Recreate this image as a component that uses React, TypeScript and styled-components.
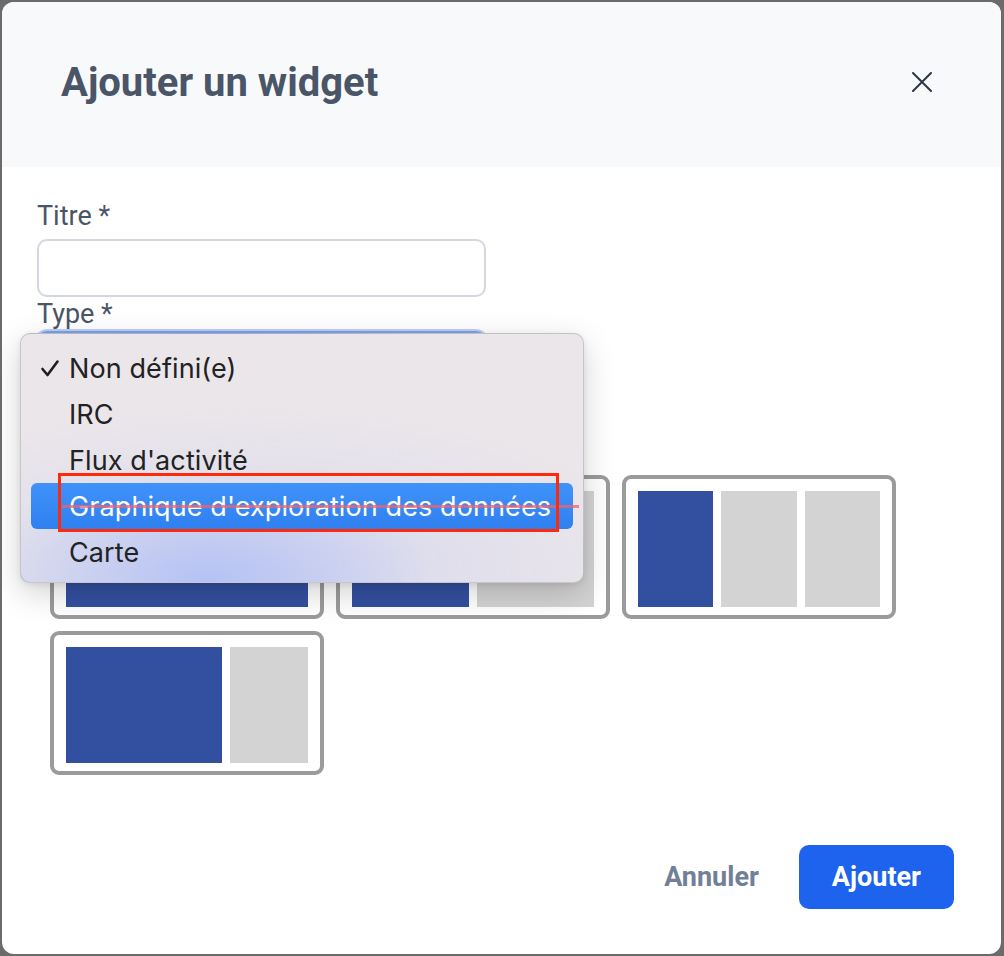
import React from "react";
import styled, { createGlobalStyle } from "styled-components";

const GlobalStyle = createGlobalStyle`
  html, body {
    margin: 0;
    padding: 0;
    background: #6b6b6b;
  }
  body {
    width: 1004px;
    height: 956px;
    overflow: hidden;
    font-family: Roboto, "Liberation Sans", sans-serif;
  }
  * { box-sizing: border-box; }
`;

const Page = styled.div`
  padding: 2px 3px 2px 2px;
`;

const Modal = styled.div`
  position: relative;
  width: 999px;
  height: 952px;
  display: flex;
  flex-direction: column;
  background: #ffffff;
  border-radius: 12px;
  overflow: hidden;
`;

const Header = styled.div`
  height: 165px;
  flex: none;
  display: flex;
  align-items: center;
  justify-content: space-between;
  padding: 0 69px 4px 59px;
  background: #f8f9fb;
`;

const Title = styled.h2`
  margin: 0;
  font: 700 40px/48px Roboto, sans-serif;
  color: #4a5568;
`;

const CloseButton = styled.button`
  width: 20px;
  height: 20px;
  padding: 0;
  border: none;
  background: transparent;
  color: #2d3748;
  display: flex;
  margin-top: -2px;
  svg { display: block; }
`;

const Body = styled.div`
  flex: 1;
  padding: 33px 35px 0 35px;
`;

const Label = styled.label<{ $gap: number }>`
  display: block;
  font: 400 27px/32px Roboto, sans-serif;
  color: #4a5568;
  margin-bottom: ${(p) => p.$gap}px;
`;

const TextInput = styled.input`
  display: block;
  width: 449px;
  height: 58px;
  border: 2px solid #d3d7df;
  border-radius: 10px;
  background: #fff;
  margin: 0 0 1px 0;
  outline: none;
`;

const SelectWrap = styled.div`
  position: relative;
  width: 449px;
`;

const SelectBox = styled.div`
  height: 58px;
  border: 2px solid #7ea3e8;
  border-radius: 10px;
  background: #fff;
  box-shadow: 0 0 0 2px rgba(110, 150, 230, 0.45);
`;

const Dropdown = styled.div`
  position: absolute;
  left: -17px;
  top: 2px;
  width: 564px;
  padding: 11px 0 7px;
  border: 1px solid rgba(0, 0, 0, 0.14);
  border-radius: 10px;
  background:
    radial-gradient(ellipse 230px 110px at 33% 100%, rgba(175, 190, 245, 0.85), rgba(175, 190, 245, 0) 100%),
    radial-gradient(ellipse 420px 160px at 40% 95%, rgba(205, 210, 240, 0.7), rgba(205, 210, 240, 0) 100%),
    #ebe6ea;
  box-shadow: 0 10px 32px rgba(0, 0, 0, 0.18), 0 2px 6px rgba(0, 0, 0, 0.08);
  z-index: 5;
`;

const Option = styled.div<{ $active?: boolean }>`
  height: 46px;
  margin: 0 10px;
  padding-left: 9px;
  display: flex;
  align-items: center;
  border-radius: 6px;
  font: 400 27px/1 Inter, "Noto Sans", sans-serif;
  letter-spacing: 0.1px;
  color: ${(p) => (p.$active ? "#ffffff" : "#222222")};
  background: ${(p) => (p.$active ? "linear-gradient(180deg, #4092fa, #2f80f0)" : "transparent")};
`;

const CheckSlot = styled.span`
  width: 29px;
  flex: none;
  display: flex;
  align-items: center;
  svg { display: block; }
`;

const RedBox = styled.div`
  position: absolute;
  left: 37px;
  top: 139px;
  width: 501px;
  height: 59px;
  border: 3px solid #ff2a0a;
  pointer-events: none;
`;

const RedLine = styled.div`
  position: absolute;
  left: 41px;
  top: 171px;
  width: 517px;
  height: 3px;
  background: rgba(238, 100, 110, 0.75);
  pointer-events: none;
`;

const LayoutGrid = styled.div`
  display: grid;
  grid-template-columns: repeat(3, 274px);
  gap: 12px;
  margin: 86px 0 0 13px;
`;

const LayoutCard = styled.div<{ $cols: string }>`
  width: 274px;
  height: 144px;
  border: 4px solid #9b9b9b;
  border-radius: 9px;
  padding: 12px 12px 8px;
  display: grid;
  grid-template-columns: ${(p) => p.$cols};
  gap: 8px;
  background: #fff;
`;

const Block = styled.div<{ $primary?: boolean }>`
  background: ${(p) => (p.$primary ? "#3350a0" : "#d3d3d3")};
`;

const Footer = styled.div`
  flex: none;
  display: flex;
  justify-content: flex-end;
  align-items: center;
  gap: 20px;
  padding: 0 47px 45px 0;
`;

const CancelButton = styled.button`
  border: none;
  background: transparent;
  padding: 0 20px;
  height: 64px;
  font: 700 27px/1 Roboto, sans-serif;
  color: #718096;
`;

const PrimaryButton = styled.button`
  border: none;
  height: 64px;
  padding: 0 33px;
  border-radius: 10px;
  background: #1d63ed;
  color: #ffffff;
  font: 700 27px/1 Roboto, sans-serif;
`;

const options = [
  "Non défini(e)",
  "IRC",
  "Flux d'activité",
  "Graphique d'exploration des données",
  "Carte",
];

const layouts: { cols: string; blocks: boolean[] }[] = [
  { cols: "1fr", blocks: [true] },
  { cols: "1fr 1fr", blocks: [true, false] },
  { cols: "1fr 1fr 1fr", blocks: [true, false, false] },
  { cols: "2fr 1fr", blocks: [true, false] },
];

export default function App() {
  return (
    <>
      <GlobalStyle />
      <Page>
        <Modal>
          <Header>
            <Title>Ajouter un widget</Title>
            <CloseButton aria-label="Fermer">
              <svg width="20" height="20" viewBox="0 0 20 20">
                <path d="M1 1 L19 19 M19 1 L1 19" stroke="currentColor" strokeWidth="2" strokeLinecap="round" />
              </svg>
            </CloseButton>
          </Header>
          <Body>
            <Label $gap={7}>Titre *</Label>
            <TextInput />
            <Label $gap={1}>Type *</Label>
            <SelectWrap>
              <SelectBox />
              <Dropdown>
                {options.map((o, i) => (
                  <Option key={o} $active={i === 3}>
                    <CheckSlot>
                      {i === 0 && (
                        <svg width="20" height="20" viewBox="0 0 20 20">
                          <path d="M2.5 11 L7.5 17 L17.5 3.5" fill="none" stroke="#1f1f1f" strokeWidth="2.6" strokeLinecap="round" strokeLinejoin="round" />
                        </svg>
                      )}
                    </CheckSlot>
                    {o}
                  </Option>
                ))}
                <RedLine />
                <RedBox />
              </Dropdown>
            </SelectWrap>
            <LayoutGrid>
              {layouts.map((l, i) => (
                <LayoutCard key={i} $cols={l.cols}>
                  {l.blocks.map((b, j) => (
                    <Block key={j} $primary={b} />
                  ))}
                </LayoutCard>
              ))}
            </LayoutGrid>
          </Body>
          <Footer>
            <CancelButton>Annuler</CancelButton>
            <PrimaryButton>Ajouter</PrimaryButton>
          </Footer>
        </Modal>
      </Page>
    </>
  );
}
